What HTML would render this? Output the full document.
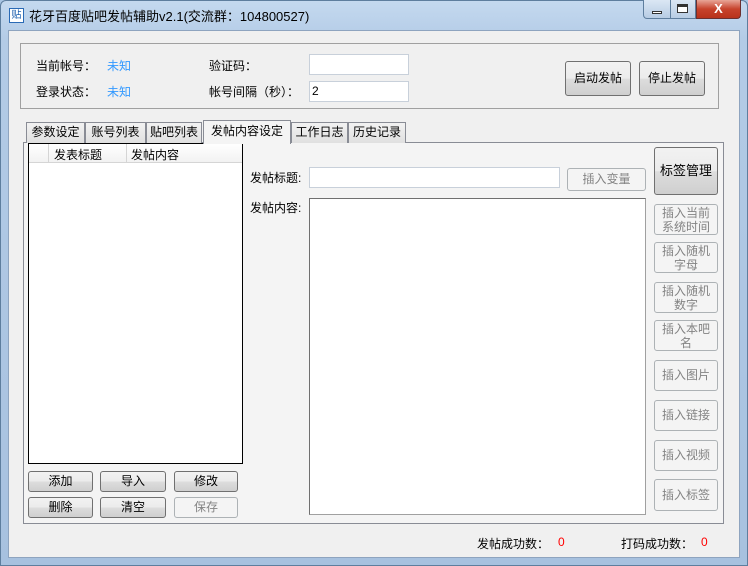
<!DOCTYPE html>
<html><head><meta charset="utf-8"><style>
*{box-sizing:border-box;margin:0;padding:0}
body{width:748px;height:566px;overflow:hidden;background:#a9c5e3;font:12px "Liberation Sans","Noto Sans CJK SC",sans-serif;color:#000;position:relative}
.a{position:absolute;white-space:nowrap}
.frame{left:0;top:0;width:748px;height:566px;background:linear-gradient(#c4d9ef,#b3cbe6 40px,#a7c1df);border:1px solid #5e7e9e;border-radius:6px 6px 0 0}
.client{left:8px;top:30px;width:732px;height:528px;background:#f0f0f0;border:1px solid #8ea4bf}
.grp{border:1px solid #a0a0a0;}
.inp{background:#fff;border:1px solid #c8d0da}
.btn{border:1px solid #707070;border-radius:3px;background:linear-gradient(#f2f2f2 0,#ebebeb 50%,#dddddd 51%,#cfcfcf);text-align:center}
.dis{border:1px solid #adb2b5;border-radius:3px;background:#f4f4f4;color:#838383;text-align:center;line-height:14px}
.tab{top:122px;height:21px;border:1px solid #898c95;border-bottom:none;background:linear-gradient(#f2f2f2,#e0e0e0);text-align:center;line-height:19px}
.blue{color:#3399ff}.red{color:#f00}
</style></head><body>
<div class="a frame"></div>
<div class="a" style="left:9px;top:8px;width:15px;height:15px;background:#fff;border:1px solid #2a6ab5;font-size:10px;color:#1d5fae;line-height:13px;text-align:center">贴</div>
<div class="a" style="left:29px;top:6px;font-size:13px">花牙百度贴吧发帖辅助v2.1(交流群：104800527)</div>
<div class="a" style="left:643px;top:0;width:28px;height:19px;border:1px solid #5e7e9e;border-top:none;border-radius:0 0 0 4px;background:linear-gradient(#dbe7f4,#b7cce4)"></div>
<div class="a" style="left:652px;top:11px;width:10px;height:3px;background:#fff;border:1px solid #333"></div>
<div class="a" style="left:670px;top:0;width:26px;height:19px;border:1px solid #5e7e9e;border-top:none;background:linear-gradient(#dbe7f4,#b7cce4)"></div>
<div class="a" style="left:677px;top:4px;width:11px;height:9px;border:1px solid #333;border-top-width:3px;background:#fff"></div>
<div class="a" style="left:696px;top:0;width:45px;height:19px;border:1px solid #6b3030;border-top:none;border-radius:0 0 4px 0;background:linear-gradient(#e8a597,#c7432c 50%,#b8321c);color:#fff;font-weight:bold;font-size:13px;text-align:center;line-height:17px">X</div>
<div class="a client"></div>

<div class="a grp" style="left:20px;top:43px;width:699px;height:66px"></div>
<div class="a" style="left:36px;top:57px">当前帐号：</div>
<div class="a blue" style="left:107px;top:57px">未知</div>
<div class="a" style="left:36px;top:83px">登录状态：</div>
<div class="a blue" style="left:107px;top:83px">未知</div>
<div class="a" style="left:209px;top:57px">验证码：</div>
<div class="a" style="left:209px;top:83px">帐号间隔（秒）：</div>
<div class="a inp" style="left:309px;top:54px;width:100px;height:21px"></div>
<div class="a inp" style="left:309px;top:81px;width:100px;height:21px;padding:2px 2px;line-height:15px">2</div>
<div class="a btn" style="left:565px;top:61px;width:66px;height:35px;line-height:33px">启动发帖</div>
<div class="a btn" style="left:639px;top:61px;width:66px;height:35px;line-height:33px">停止发帖</div>

<div class="a" style="left:23px;top:142px;width:701px;height:382px;border:1px solid #898c95;background:#f4f4f4"></div>
<div class="a tab" style="left:26px;width:59px">参数设定</div>
<div class="a tab" style="left:85px;width:61px">账号列表</div>
<div class="a tab" style="left:146px;width:56px">贴吧列表</div>
<div class="a tab" style="left:291px;width:57px">工作日志</div>
<div class="a tab" style="left:348px;width:58px">历史记录</div>
<div class="a tab" style="left:203px;top:120px;width:88px;height:24px;background:#f4f4f4;line-height:21px;z-index:2">发帖内容设定</div>

<div class="a" style="left:28px;top:143px;width:215px;height:321px;background:#fff;border:1px solid #000"></div>
<div class="a" style="left:29px;top:144px;width:213px;height:19px;background:linear-gradient(#fff,#f2f2f2);border-bottom:1px solid #d5d5d5"></div>
<div class="a" style="left:48px;top:144px;width:1px;height:19px;background:#d5d5d5"></div>
<div class="a" style="left:126px;top:144px;width:1px;height:19px;background:#d5d5d5"></div>
<div class="a" style="left:54px;top:146px">发表标题</div>
<div class="a" style="left:131px;top:146px">发帖内容</div>

<div class="a btn" style="left:28px;top:471px;width:65px;height:21px;line-height:19px">添加</div>
<div class="a btn" style="left:100px;top:471px;width:66px;height:21px;line-height:19px">导入</div>
<div class="a btn" style="left:174px;top:471px;width:64px;height:21px;line-height:19px">修改</div>
<div class="a btn" style="left:28px;top:497px;width:65px;height:21px;line-height:19px">删除</div>
<div class="a btn" style="left:100px;top:497px;width:66px;height:21px;line-height:19px">清空</div>
<div class="a dis" style="left:174px;top:497px;width:64px;height:21px;line-height:19px">保存</div>

<div class="a" style="left:250px;top:169px">发帖标题:</div>
<div class="a inp" style="left:309px;top:167px;width:251px;height:21px"></div>
<div class="a dis" style="left:567px;top:168px;width:79px;height:23px;line-height:21px">插入变量</div>
<div class="a" style="left:250px;top:199px">发帖内容:</div>
<div class="a" style="left:309px;top:198px;width:337px;height:317px;background:#fff;border:1px solid #a0a0a0;border-top-color:#707070;border-left-color:#707070"></div>
<div class="a btn" style="left:654px;top:147px;width:64px;height:48px;line-height:46px;font-size:13px">标签管理</div>
<div class="a dis" style="left:654px;top:204px;width:64px;height:31px;padding-top:1px">插入当前<br>系统时间</div>
<div class="a dis" style="left:654px;top:242px;width:64px;height:31px;padding-top:1px">插入随机<br>字母</div>
<div class="a dis" style="left:654px;top:282px;width:64px;height:31px;padding-top:1px">插入随机<br>数字</div>
<div class="a dis" style="left:654px;top:320px;width:64px;height:31px;padding-top:1px">插入本吧<br>名</div>
<div class="a dis" style="left:654px;top:360px;width:64px;height:31px;line-height:29px">插入图片</div>
<div class="a dis" style="left:654px;top:400px;width:64px;height:31px;line-height:29px">插入链接</div>
<div class="a dis" style="left:654px;top:440px;width:64px;height:31px;line-height:29px">插入视频</div>
<div class="a dis" style="left:654px;top:479px;width:64px;height:32px;line-height:30px">插入标签</div>

<div class="a" style="left:477px;top:535px">发帖成功数：</div>
<div class="a red" style="left:558px;top:535px">0</div>
<div class="a" style="left:621px;top:535px">打码成功数：</div>
<div class="a red" style="left:701px;top:535px">0</div>
</body></html>
